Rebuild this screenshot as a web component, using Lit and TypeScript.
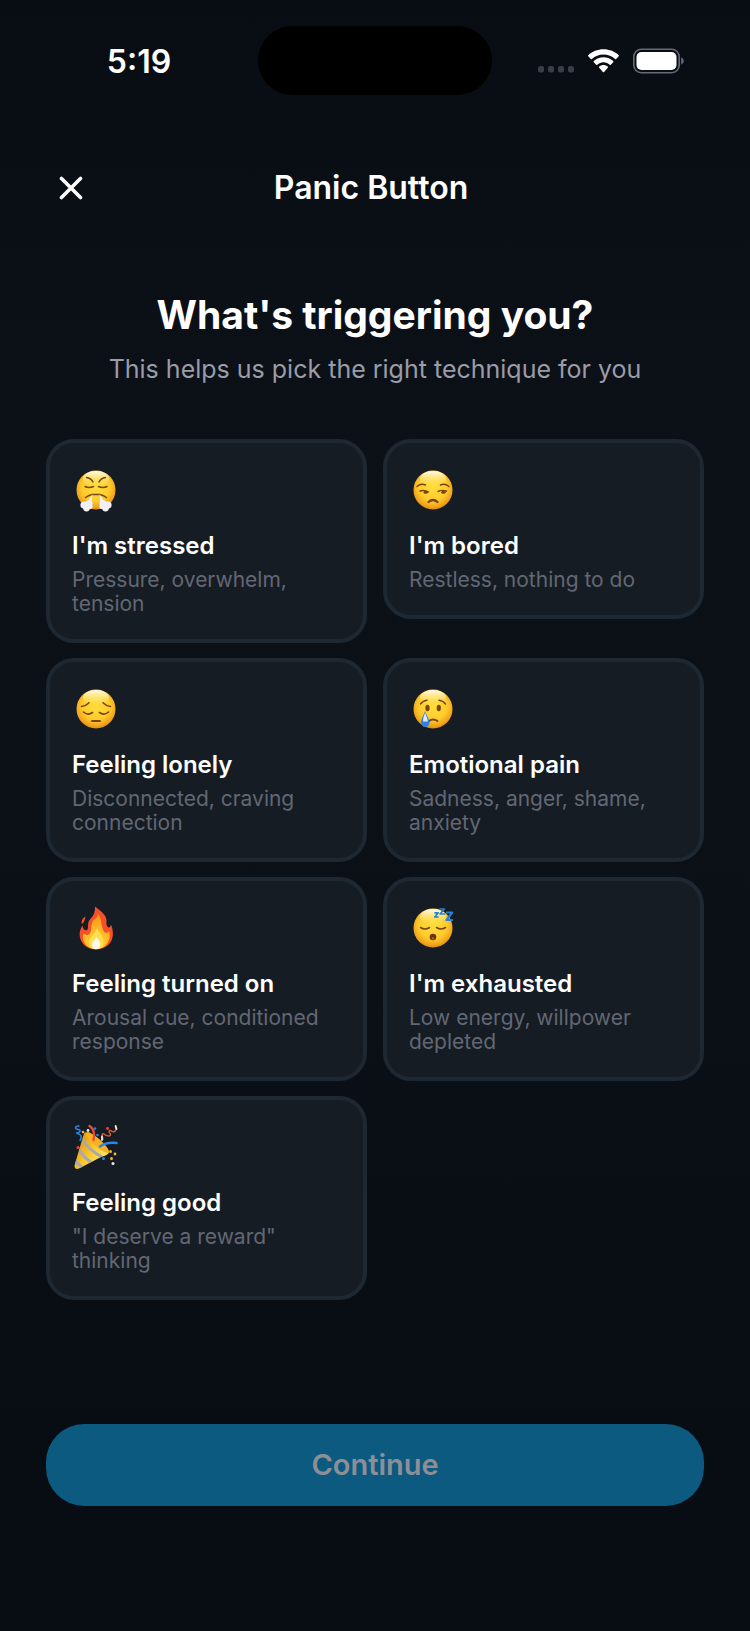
import { LitElement, html, svg, css, type SVGTemplateResult } from "lit";
import { customElement, property, state } from "lit/decorators.js";
import { classMap } from "lit/directives/class-map.js";

interface Trigger {
  id: string;
  title: string;
  detail: string;
}

const TRIGGERS: Trigger[] = [
  { id: "stressed", title: "I'm stressed", detail: "Pressure, overwhelm, tension" },
  { id: "bored", title: "I'm bored", detail: "Restless, nothing to do" },
  { id: "lonely", title: "Feeling lonely", detail: "Disconnected, craving connection" },
  { id: "pain", title: "Emotional pain", detail: "Sadness, anger, shame, anxiety" },
  { id: "turned-on", title: "Feeling turned on", detail: "Arousal cue, conditioned response" },
  { id: "exhausted", title: "I'm exhausted", detail: "Low energy, willpower depleted" },
  { id: "good", title: "Feeling good", detail: '"I deserve a reward" thinking' },
];

const face = svg`
  <defs>
    <radialGradient id="skin" cx="0.5" cy="0.42" r="0.6">
      <stop offset="0" stop-color="#ffde3c" />
      <stop offset="0.6" stop-color="#fdcb2c" />
      <stop offset="0.85" stop-color="#f2a41c" />
      <stop offset="1" stop-color="#d98410" />
    </radialGradient>
    <linearGradient id="shine" x1="0" y1="0" x2="0" y2="1">
      <stop offset="0" stop-color="#ffffff" stop-opacity="0.95" />
      <stop offset="1" stop-color="#fff27a" stop-opacity="0" />
    </linearGradient>
  </defs>
  <circle cx="24" cy="25" r="19.5" fill="url(#skin)" />
  <ellipse cx="24" cy="13.5" rx="13" ry="7.5" fill="url(#shine)" />
`;

const GLYPHS: Record<string, SVGTemplateResult> = {
  stressed: svg`
    ${face}
    <g fill="none" stroke="#7b430f" stroke-width="1.5" stroke-linecap="round">
      <path d="M14.5 12.5Q19 13 21 17" />
      <path d="M33.5 12.5Q29 13 27 17" />
      <path d="M13 21.5Q17 23.5 21.5 21.5" />
      <path d="M35 21.5Q31 23.5 26.5 21.5" />
      <path d="M13.5 32.5Q17 30 20.5 29.5H27.5Q31 30 34.5 32.5" />
    </g>
    <g fill="#f1f1f5">
      <path d="M20.5 29L15.5 37L19.5 39Z" />
      <circle cx="12" cy="40" r="3.6" /><circle cx="17" cy="38.5" r="3.6" />
      <circle cx="14.5" cy="43" r="3.4" /><circle cx="18" cy="41.5" r="2.6" />
      <path d="M27.5 29L32.5 37L28.5 39Z" />
      <circle cx="36" cy="40" r="3.6" /><circle cx="31" cy="38.5" r="3.6" />
      <circle cx="33.5" cy="43" r="3.4" /><circle cx="30" cy="41.5" r="2.6" />
    </g>
  `,
  bored: svg`
    ${face}
    <g fill="none" stroke="#7b430f" stroke-width="1.4" stroke-linecap="round">
      <path d="M8 21.5Q12 18 16.5 20" />
      <path d="M31.5 20Q36 18 40 21.5" />
      <path d="M11 26Q15 24.5 19.5 27" />
      <path d="M29 26.5Q33 24.5 37.5 26" />
      <path d="M19.5 37Q24 33 28.5 37" stroke-width="2.2" />
    </g>
    <g fill="#7b430f">
      <ellipse cx="16.8" cy="27.2" rx="2.2" ry="1.6" />
      <ellipse cx="34.5" cy="27.2" rx="2.2" ry="1.6" />
    </g>
  `,
  lonely: svg`
    ${face}
    <g fill="none" stroke="#7b430f" stroke-width="1.6" stroke-linecap="round">
      <path d="M9.5 22.5Q14 22 17 18.8" />
      <path d="M38.5 22.5Q34 22 31 18.8" />
      <path d="M11.5 28Q16 32 20.5 28.5" />
      <path d="M36.5 28Q32 32 27.5 28.5" />
      <path d="M20 37H28" stroke-width="1.9" />
    </g>
  `,
  pain: svg`
    ${face}
    <g fill="none" stroke="#7b430f" stroke-width="1.4" stroke-linecap="round">
      <path d="M11.5 20Q14 16.5 18 16.2" />
      <path d="M36.5 20Q34 16.5 30 16.2" />
      <path d="M20 37Q24 34 28.5 37" stroke-width="1.9" />
    </g>
    <g fill="#7b430f">
      <ellipse cx="18.5" cy="24" rx="2.1" ry="3.2" />
      <ellipse cx="29.8" cy="24" rx="2.1" ry="3.2" />
    </g>
    <path d="M16 27C14.5 32 12 34.5 12 38.5A4.2 4.5 0 0 0 20.5 38.5C20.5 34.5 17.5 32 16 27Z" fill="#2f80df" />
    <path d="M16 28.5C15.2 32 13.8 34 14 37.5H18.8C18.8 34 17 32 16 28.5Z" fill="#dcebfb" />
  `,
  "turned-on": svg`
    <defs>
      <radialGradient id="flame" cx="0.5" cy="0.9" r="0.8">
        <stop offset="0" stop-color="#fff3a0" />
        <stop offset="0.35" stop-color="#ffc92e" />
        <stop offset="1" stop-color="#f79a1c" />
      </radialGradient>
    </defs>
    <path d="M23 3.5C27 7 34.5 11 34.5 17.5C34.5 20 34 23 36.5 24.5C38.300 24.500 38.800 23 38.800 21.500C41.500 27 41.500 33 39.500 37.500C37 43 31 46.500 24 46.500S11.500 43 9 37.500C7 32.500 7 28 10.500 22.500C10.800 25.500 12 27.300 14.500 27.300C16.500 27 15.800 23 16.200 20C16.800 15.500 23.500 14 23 3.500Z" fill="#f4512a" />
    <path d="M13.500 13.500C10.500 15 9 18 9.800 21C12.500 19.500 13 16.500 13.500 13.500Z" fill="#f4512a" />
    <path d="M26 11C30 15.500 28.500 20 30.500 25C31.200 27 32 30 34.500 30C36 30 36.800 28.500 37 27.500C38.500 33 37.500 37 35.500 40C33 44 29 46 24 46S15 44 12.500 40C10.500 36.500 10.500 34 11.500 30.500C13 32 16 32.500 17.500 31C20 28 18.500 23 20.500 19C22.500 15.500 25.500 15 26 11Z" fill="url(#flame)" />
    <path d="M25 25C26 29.500 31.500 32 31.500 38C31.500 43 28.500 46 24 46S17 43 17 38.500C17 33 24 30.500 25 25Z" fill="#ffdf50" />
    <path d="M24.500 34C26 37 28.500 38 28.200 41.500C28 44.500 26.500 46.200 24 46.200S20 44.500 20 41.500C20 38.500 23 37 24.500 34Z" fill="#fff9ea" />
  `,
  exhausted: svg`
    ${face}
    <g fill="none" stroke="#7b430f" stroke-width="1.6" stroke-linecap="round">
      <path d="M11.5 24.500Q16 27.500 20.500 24.500" />
      <path d="M27.5 24.500Q32 27.500 36.500 24.500" />
    </g>
    <circle cx="24" cy="34" r="3.300" fill="#6b350c" />
    <circle cx="24" cy="35.200" r="1.200" fill="#a5611d" />
    <g fill="none" stroke="#2384d8" stroke-width="1.700" stroke-linejoin="round" stroke-linecap="round">
      <path d="M26 9.800H29.200L25.800 14H29" />
      <path d="M31 6H35.500L31 11H35.500" />
      <path d="M38 9.500H43.200L37.500 17H43" stroke-width="2.200" />
    </g>
  `,
  good: svg`
    <defs>
      <linearGradient id="cone" x1="0.1" y1="0.3" x2="0.8" y2="0.8">
        <stop offset="0" stop-color="#e79a12" />
        <stop offset="0.5" stop-color="#fbc62a" />
        <stop offset="1" stop-color="#ffe862" />
      </linearGradient>
      <clipPath id="cone-shape">
        <path d="M12.500 9L36 29.500Q34 32.500 29 33.500L6 45.500Q1.500 47 1.500 42.500L10.500 12Q11 9.500 12.500 9Z" />
      </clipPath>
    </defs>
    <g transform="translate(1 1)">
      <path d="M12.500 9L36 29.500Q34 32.500 29 33.500L6 45.500Q1.500 47 1.500 42.500L10.500 12Q11 9.500 12.500 9Z" fill="url(#cone)" />
      <g clip-path="url(#cone-shape)" fill="none" stroke="#a8a9ac" stroke-width="3">
        <path d="M10 17Q16 27 29 34" />
        <path d="M6 26Q10 34 19 40" />
        <path d="M2 37Q5 42 10 45" />
      </g>
      <ellipse cx="24.500" cy="19.500" rx="15" ry="3.800" transform="rotate(42 24.500 19.500)" fill="#f5b322" />
      <g fill="none" stroke-linecap="round" stroke-linejoin="round">
        <path d="M16.500 3C21 5.500 22 12 20.500 17" stroke="#ee4b32" stroke-width="2.400" />
        <path d="M27 23.500Q33 19 43.500 20" stroke="#2f86e0" stroke-width="2.600" />
        <path d="M6 3C2 3 1 6 5 6.500C9 7 7 10 3.500 10C7 11 10 13 7 17.500" stroke="#2f86e0" stroke-width="1.500" />
        <path d="M43 3C44 8 41 10 38.500 8C36 6.500 35 9 37.500 11C38 14 33 13 31 11C29 9.500 28.500 13 30 16" stroke="#d9572f" stroke-width="1.500" />
        <path d="M42.500 3L43.500 6M29 13.500V17" stroke="#eceef2" stroke-width="1.800" />
      </g>
      <g fill="#2f86e0"><circle cx="22" cy="5.500" r="1.300" /><circle cx="24.500" cy="12" r="1.300" /><circle cx="30.500" cy="35.500" r="1.500" /></g>
      <g fill="#ee4b32"><circle cx="34.500" cy="5.500" r="1.400" /><circle cx="5" cy="24.500" r="1.500" /></g>
      <g fill="#f9b52c"><circle cx="10" cy="9" r="1.300" /><circle cx="37.500" cy="28.500" r="1.500" /><circle cx="42" cy="31" r="1.400" /><circle cx="38.500" cy="35.500" r="1.500" /></g>
      <g fill="#e6e9ee"><circle cx="15" cy="7.500" r="1.400" /><circle cx="40" cy="40.500" r="1.500" /></g>
    </g>
  `,
};

@customElement("status-bar")
export class StatusBar extends LitElement {
  static styles = css`
    :host {
      display: grid;
      grid-template-columns: 1fr 234px 1fr;
      align-items: center;
      padding-top: 26px;
    }
    .time {
      padding: 2px 0 0 20px;
      text-align: center;
      font-size: 32px;
      line-height: 40px;
      font-weight: 600;
    }
    .island {
      height: 69px;
      border-radius: 35px;
      background: #000;
    }
    .signals {
      display: flex;
      justify-content: flex-end;
      align-items: center;
      gap: 14px;
      padding-right: 66px;
    }
    svg {
      display: block;
    }
  `;

  render() {
    return html`
      <div class="time">5:19</div>
      <div class="island"></div>
      <div class="signals">
        <svg width="36" height="26" viewBox="0 0 36 26" fill="#3a3d48" aria-label="No signal">
          ${[0, 10, 20, 30].map((x) => svg`<rect x=${x} y="18" width="6" height="6.500" rx="2" />`)}
        </svg>
        <svg width="31" height="26" viewBox="0 0 31 26" fill="#fff" aria-label="Wi-Fi">
          <path d="M15.500 1.300C21.500 1.300 27 3.600 30.700 7.200Q31.200 7.800 30.700 8.300L28.200 10.900Q27.700 11.400 27.100 10.900C24 8 20 6.400 15.500 6.400S7 8 3.900 10.900Q3.300 11.400 2.800 10.900L0.300 8.300Q-0.200 7.800 0.300 7.200C4 3.600 9.500 1.300 15.500 1.300Z" />
          <path d="M15.500 9.200C19.300 9.200 22.700 10.700 25.200 13.100Q25.700 13.700 25.200 14.200L22.800 16.700Q22.300 17.200 21.700 16.700C20 15.100 18 14.200 15.500 14.200S11 15.100 9.300 16.700Q8.700 17.200 8.200 16.700L5.800 14.200Q5.300 13.700 5.800 13.100C8.300 10.700 11.700 9.200 15.500 9.200Z" />
          <path d="M15.500 16.900C17.200 16.900 18.700 17.500 19.800 18.600Q20.300 19.200 19.800 19.700L16.100 23.900Q15.500 24.500 14.900 23.900L11.200 19.700Q10.700 19.200 11.200 18.600C12.300 17.500 13.800 16.900 15.500 16.900Z" />
        </svg>
        <svg width="51" height="26" viewBox="0 0 51 26" aria-label="Battery full">
          <rect x="0.800" y="1.300" width="45.400" height="23.400" rx="7.500" fill="none" stroke="#666a77" stroke-width="1.600" />
          <rect x="3.500" y="4" width="40" height="18" rx="5" fill="#fff" />
          <path d="M48.200 9.300Q50.800 10.500 50.800 13T48.200 16.700Z" fill="#666a77" />
        </svg>
      </div>
    `;
  }
}

@customElement("trigger-card")
export class TriggerCard extends LitElement {
  static styles = css`
    :host {
      display: block;
    }
    .card {
      display: flex;
      flex-direction: column;
      align-items: flex-start;
      box-sizing: border-box;
      width: 100%;
      margin: 0;
      padding: 22px 22px 23px;
      border: 4px solid #1e2833;
      border-radius: 28px;
      background: #151c23;
      color: #fff;
      font: inherit;
      text-align: left;
      cursor: pointer;
    }
    .selected {
      border-color: #1490cc;
    }
    .glyph {
      display: block;
      width: 48px;
      height: 48px;
    }
    .title {
      margin-top: 19px;
      font-size: 24px;
      line-height: 28px;
      font-weight: 600;
    }
    .detail {
      margin-top: 8px;
      color: #636774;
      font-size: 21px;
      line-height: 24px;
    }
  `;

  @property({ attribute: false }) trigger!: Trigger;
  @property({ type: Boolean }) selected = false;

  render() {
    return html`
      <button
        type="button"
        class=${classMap({ card: true, selected: this.selected })}
        aria-pressed=${this.selected ? "true" : "false"}
      >
        <svg class="glyph" viewBox="0 0 48 48" aria-hidden="true">${GLYPHS[this.trigger.id]}</svg>
        <span class="title">${this.trigger.title}</span>
        <span class="detail">${this.trigger.detail}</span>
      </button>
    `;
  }
}

@customElement("app-root")
export class AppRoot extends LitElement {
  static styles = css`
    :host {
      display: flex;
      flex-direction: column;
      min-height: 100vh;
      background: linear-gradient(#080d14, #0c1118 25%, #0b1017 60%, #080d14 88%);
      color: #fff;
      font-family: Inter, "Liberation Sans", sans-serif;
    }
    .header {
      display: grid;
      grid-template-columns: 50px 1fr 50px;
      align-items: center;
      padding: 68px 54px 0 46px;
    }
    .close {
      display: grid;
      place-items: center;
      width: 50px;
      height: 50px;
      margin: 0;
      padding: 0;
      border: 0;
      background: none;
      color: inherit;
      cursor: pointer;
    }
    .name {
      margin: 0;
      text-align: center;
      font-size: 32px;
      line-height: 40px;
      font-weight: 600;
    }
    .intro {
      padding: 78px 46px 0;
      text-align: center;
    }
    .question {
      margin: 0;
      font-size: 39px;
      line-height: 48px;
      font-weight: 700;
    }
    .hint {
      margin: 14px 0 0;
      color: #9a9ca8;
      font-size: 25px;
      line-height: 32px;
    }
    .triggers {
      display: grid;
      grid-template-columns: 1fr 1fr;
      align-items: start;
      gap: 15px 16px;
      padding: 54px 46px 124px;
    }
    .footer {
      margin-top: auto;
      padding: 0 46px 125px;
    }
    .continue {
      display: block;
      width: 100%;
      height: 82px;
      margin: 0;
      border: 0;
      border-radius: 38px;
      background: #1490cc;
      color: #fff;
      font: inherit;
      font-size: 29px;
      line-height: 36px;
      font-weight: 600;
    }
    .continue:disabled {
      background: #0c5a80;
      color: #8e8e96;
    }
  `;

  @state() private chosen = "";

  render() {
    return html`
      <status-bar></status-bar>
      <header class="header">
        <button type="button" class="close" aria-label="Close">
          <svg width="24" height="24" viewBox="0 0 24 24" fill="none" stroke="currentColor" stroke-width="3.600" stroke-linecap="round">
            <path d="M2.500 2.500L21.500 21.500M21.500 2.500L2.500 21.500" />
          </svg>
        </button>
        <h1 class="name">Panic Button</h1>
      </header>
      <section class="intro">
        <h2 class="question">What's triggering you?</h2>
        <p class="hint">This helps us pick the right technique for you</p>
      </section>
      <section class="triggers">
        ${TRIGGERS.map(
          (t) => html`<trigger-card
            .trigger=${t}
            ?selected=${this.chosen === t.id}
            @click=${() => (this.chosen = t.id)}
          ></trigger-card>`
        )}
      </section>
      <footer class="footer">
        <button type="button" class="continue" ?disabled=${!this.chosen}>Continue</button>
      </footer>
    `;
  }
}
